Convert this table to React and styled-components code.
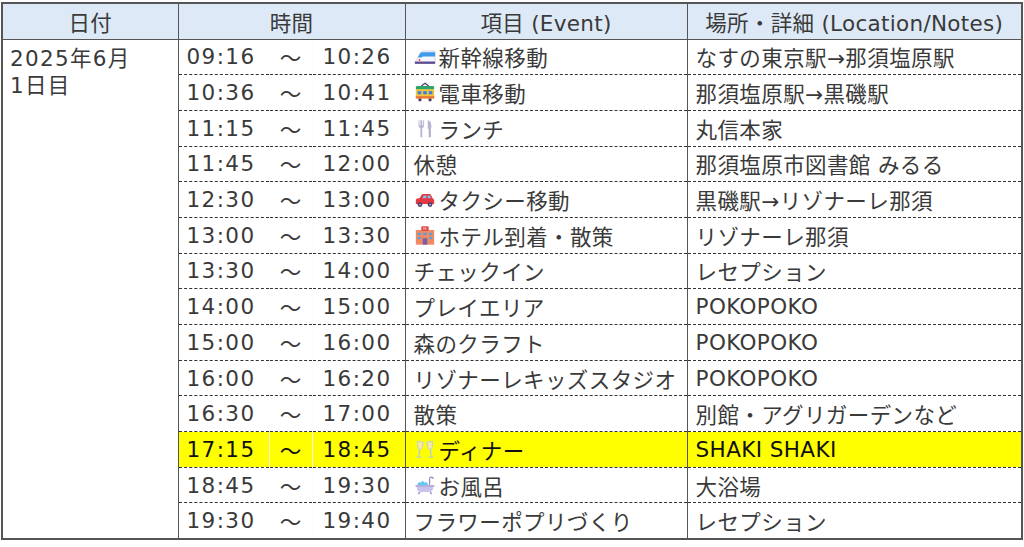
import React from "react";
import styled, { createGlobalStyle } from "styled-components";

const GlobalStyle = createGlobalStyle`
  html, body {
    margin: 0;
    padding: 0;
    background: #ffffff;
  }
  body {
    font-family: "DejaVu Sans", "Noto Sans CJK JP", sans-serif;
  }
`;

// icons drawn inline (no emoji font available)
const Shinkansen = () => (
  <svg width="22" height="21" viewBox="0 0 24 22">
    <path d="M1 18 L7 7 Q8 5 10 5 L23 5 L23 18 Z" fill="#f4f6fb" stroke="#c9cbe0" strokeWidth="0.8" />
    <path d="M4.2 12 L6.8 7.4 Q7.6 6.4 9 6.4 L23 6.4 L23 11 L10 11 Q9 11 8.4 12 Z" fill="#3d9be9" />
    <rect x="1" y="16.5" width="22" height="2.5" fill="#5a4b8c" />
    <circle cx="6" cy="14.8" r="1" fill="#e8455a" />
  </svg>
);

const Tram = () => (
  <svg width="22" height="21" viewBox="0 0 24 22">
    <path d="M8 4 L12 1 L16 4" fill="none" stroke="#4b3f6b" strokeWidth="1.3" />
    <rect x="2" y="4" width="20" height="4" rx="1.5" fill="#2fa36b" />
    <rect x="2" y="7.5" width="20" height="10" fill="#f7c53c" />
    <rect x="4" y="9.5" width="4" height="3.5" fill="#3f7fe0" />
    <rect x="10" y="9.5" width="4" height="3.5" fill="#3f7fe0" />
    <rect x="16" y="9.5" width="4" height="3.5" fill="#3f7fe0" />
    <rect x="2" y="15" width="20" height="2.5" fill="#e8743b" />
    <circle cx="6.5" cy="19" r="1.8" fill="#4b3f6b" />
    <circle cx="17.5" cy="19" r="1.8" fill="#4b3f6b" />
  </svg>
);

const Cutlery = () => (
  <svg width="22" height="21" viewBox="0 0 24 22">
    <path d="M5 2 V8 Q5 10 7 10.5 V20.5 H9 V10.5 Q11 10 11 8 V2 H10 V7.5 H9 V2 H7 V7.5 H6 V2 Z" fill="#b9b4d2" />
    <path d="M15 2 Q19 2.5 19 9 L18.5 11 V20.5 H16 V12 Q15 11.5 15 10 Z" fill="#b9b4d2" />
  </svg>
);

const Car = () => (
  <svg width="22" height="21" viewBox="0 0 24 22">
    <path d="M2 16 V12 Q2 10.5 3.5 10 L6 9.5 L8.5 5.5 Q9 5 10 5 H17 Q18 5 18.5 6 L20.5 10 Q22 10.5 22 12 V16 Z" fill="#e4373f" />
    <path d="M9 9.5 L10.6 6.6 H13.6 V9.5 Z" fill="#7fc3f0" />
    <path d="M15 9.5 V6.6 H17.4 L18.8 9.5 Z" fill="#7fc3f0" />
    <circle cx="6.5" cy="16.5" r="2.6" fill="#4b3f6b" />
    <circle cx="17.5" cy="16.5" r="2.6" fill="#4b3f6b" />
    <circle cx="6.5" cy="16.5" r="1" fill="#b9b4d2" />
    <circle cx="17.5" cy="16.5" r="1" fill="#b9b4d2" />
  </svg>
);

const Hotel = () => (
  <svg width="22" height="21" viewBox="0 0 24 22">
    <rect x="2" y="5" width="20" height="16" fill="#f08a63" />
    <rect x="8" y="1" width="8" height="5" rx="1" fill="#e4484a" />
    <text x="12" y="5.3" fontSize="4.5" textAnchor="middle" fill="#ffffff" fontFamily="DejaVu Sans">H</text>
    <rect x="4" y="8" width="3.5" height="2.5" fill="#4fa3e3" />
    <rect x="10.2" y="8" width="3.5" height="2.5" fill="#4fa3e3" />
    <rect x="16.5" y="8" width="3.5" height="2.5" fill="#4fa3e3" />
    <rect x="4" y="12.5" width="3.5" height="2.5" fill="#4fa3e3" />
    <rect x="16.5" y="12.5" width="3.5" height="2.5" fill="#4fa3e3" />
    <rect x="9.5" y="14" width="5" height="7" fill="#7a5ea8" />
  </svg>
);

const Glasses = () => (
  <svg width="22" height="21" viewBox="0 0 24 22">
    <path d="M4 2 L10 3 L9 9 Q8 11.5 6 11 Q4 10.5 4 8 Z" fill="#fbe7a8" stroke="#a9cde6" strokeWidth="0.9" />
    <path d="M6 11 L5.5 18 M3 19 L8 19.5" stroke="#a9cde6" strokeWidth="1.3" fill="none" />
    <path d="M14 3 L20 2 L20 8 Q20 10.5 18 11 Q16 11.5 15 9 Z" fill="#fbe7a8" stroke="#a9cde6" strokeWidth="0.9" />
    <path d="M18 11 L18.5 18 M16 19.5 L21 19" stroke="#a9cde6" strokeWidth="1.3" fill="none" />
  </svg>
);

const Bath = () => (
  <svg width="22" height="21" viewBox="0 0 24 22">
    <path d="M17 11 V4 Q17 2 19 2 Q21 2 21 4" fill="none" stroke="#9a92c2" strokeWidth="1.4" />
    <circle cx="6" cy="9.5" r="2" fill="#5cc8f2" />
    <circle cx="9.5" cy="8.5" r="2.2" fill="#5cc8f2" />
    <circle cx="13" cy="9.5" r="2" fill="#5cc8f2" />
    <rect x="1.5" y="10.5" width="21" height="2" rx="1" fill="#b7afdc" />
    <path d="M3 12.5 H21 Q21 18 16 18 H8 Q3 18 3 12.5 Z" fill="#c9c2ea" />
    <path d="M6 18 L5 20.5 M18 18 L19 20.5" stroke="#9a92c2" strokeWidth="1.6" />
  </svg>
);

const rows = [
  { start: "09:16", end: "10:26", icon: <Shinkansen />, event: "新幹線移動", place: "なすの東京駅→那須塩原駅" },
  { start: "10:36", end: "10:41", icon: <Tram />, event: "電車移動", place: "那須塩原駅→黒磯駅" },
  { start: "11:15", end: "11:45", icon: <Cutlery />, event: "ランチ", place: "丸信本家" },
  { start: "11:45", end: "12:00", event: "休憩", place: "那須塩原市図書館 みるる" },
  { start: "12:30", end: "13:00", icon: <Car />, event: "タクシー移動", place: "黒磯駅→リゾナーレ那須" },
  { start: "13:00", end: "13:30", icon: <Hotel />, event: "ホテル到着・散策", place: "リゾナーレ那須" },
  { start: "13:30", end: "14:00", event: "チェックイン", place: "レセプション" },
  { start: "14:00", end: "15:00", event: "プレイエリア", place: "POKOPOKO" },
  { start: "15:00", end: "16:00", event: "森のクラフト", place: "POKOPOKO" },
  { start: "16:00", end: "16:20", event: "リゾナーレキッズスタジオ", place: "POKOPOKO" },
  { start: "16:30", end: "17:00", event: "散策", place: "別館・アグリガーデンなど" },
  { start: "17:15", end: "18:45", icon: <Glasses />, event: "ディナー", place: "SHAKI SHAKI", hl: true },
  { start: "18:45", end: "19:30", icon: <Bath />, event: "お風呂", place: "大浴場" },
  { start: "19:30", end: "19:40", event: "フラワーポプリづくり", place: "レセプション" },
];

export default function App() {
  return (
    <>
      <GlobalStyle />
      <Table>
        <colgroup>
          <col style={{ width: 176 }} />
          <col style={{ width: 91 }} />
          <col style={{ width: 43 }} />
          <col style={{ width: 93 }} />
          <col style={{ width: 282 }} />
          <col style={{ width: 335 }} />
        </colgroup>
        <thead>
          <HeadRow>
            <Th>日付</Th>
            <Th colSpan={3}>時間</Th>
            <Th>項目 (Event)</Th>
            <Th>場所・詳細 (Location/Notes)</Th>
          </HeadRow>
        </thead>
        <tbody>
          {rows.map((r, i) => (
            <Row key={i}>
              {i === 0 && (
                <DateCell rowSpan={rows.length}>
                  2025年6月
                  <br />
                  1日目
                </DateCell>
              )}
              <TimeCell $hl={r.hl} $first>{r.start}</TimeCell>
              <TildeCell $hl={r.hl}>〜</TildeCell>
              <TimeCell $hl={r.hl}>{r.end}</TimeCell>
              <Cell $hl={r.hl}>
                <EventBox>
                  {r.icon && <IconWrap>{r.icon}</IconWrap>}
                  {r.event}
                </EventBox>
              </Cell>
              <Cell $hl={r.hl}>{r.place}</Cell>
            </Row>
          ))}
        </tbody>
      </Table>
    </>
  );
}

// CSS
const Table = styled.table`
  border-collapse: collapse;
  table-layout: fixed;
  width: 1020px;
  margin: 2px 0 0 1px;
  border: 2px solid #555;
  font-size: 21.5px;
  color: #3a3a3a;
  font-family: "DejaVu Sans", "Noto Sans CJK JP", sans-serif;
`;
const HeadRow = styled.tr`
  height: 36px;
  background-color: #dde9f6;
`;
const Th = styled.th`
  font-weight: 400;
  text-align: center;
  padding: 0;
  border: 1.5px solid #555;
  letter-spacing: 0.3px;
  white-space: nowrap;
`;
const Row = styled.tr`
  height: 35.7px;
`;
const DateCell = styled.td`
  vertical-align: top;
  padding: 5px 0 0 7px;
  line-height: 27px;
  border-right: 1.5px solid #555;
  letter-spacing: 1.3px;
`;
const Cell = styled.td`
  padding: 0 0 0 8px;
  border-top: 1px dashed #333;
  border-bottom: 1px dashed #333;
  border-left: 1.5px solid #555;
  background-color: ${(p) => (p.$hl ? "#ffff00" : "transparent")};
  color: ${(p) => (p.$hl ? "#111" : "#3a3a3a")};
  white-space: nowrap;
  overflow: hidden;
  letter-spacing: 0.4px;
`;
const TimeCell = styled.td`
  padding: 0 0 0 ${(p) => (p.$first ? "8px" : "10px")};
  border-top: 1px dashed #333;
  border-bottom: 1px dashed #333;
  border-left: ${(p) => (p.$first ? "1.5px solid #555" : "1px solid #fdfdf0")};
  background-color: ${(p) => (p.$hl ? "#ffff00" : "transparent")};
  color: ${(p) => (p.$hl ? "#111" : "#3a3a3a")};
  letter-spacing: 1.4px;
  white-space: nowrap;
`;
const TildeCell = styled.td`
  padding: 0;
  text-align: center;
  border-top: 1px dashed #333;
  border-bottom: 1px dashed #333;
  border-left: 1px solid #fdfdf0;
  background-color: ${(p) => (p.$hl ? "#ffff00" : "transparent")};
  color: ${(p) => (p.$hl ? "#111" : "#3a3a3a")};
  font-family: "Noto Sans CJK JP", sans-serif;
`;
const EventBox = styled.div`
  display: flex;
  align-items: center;
  gap: 3px;
`;
const IconWrap = styled.span`
  display: inline-flex;
  width: 22px;
  height: 21px;
`;
